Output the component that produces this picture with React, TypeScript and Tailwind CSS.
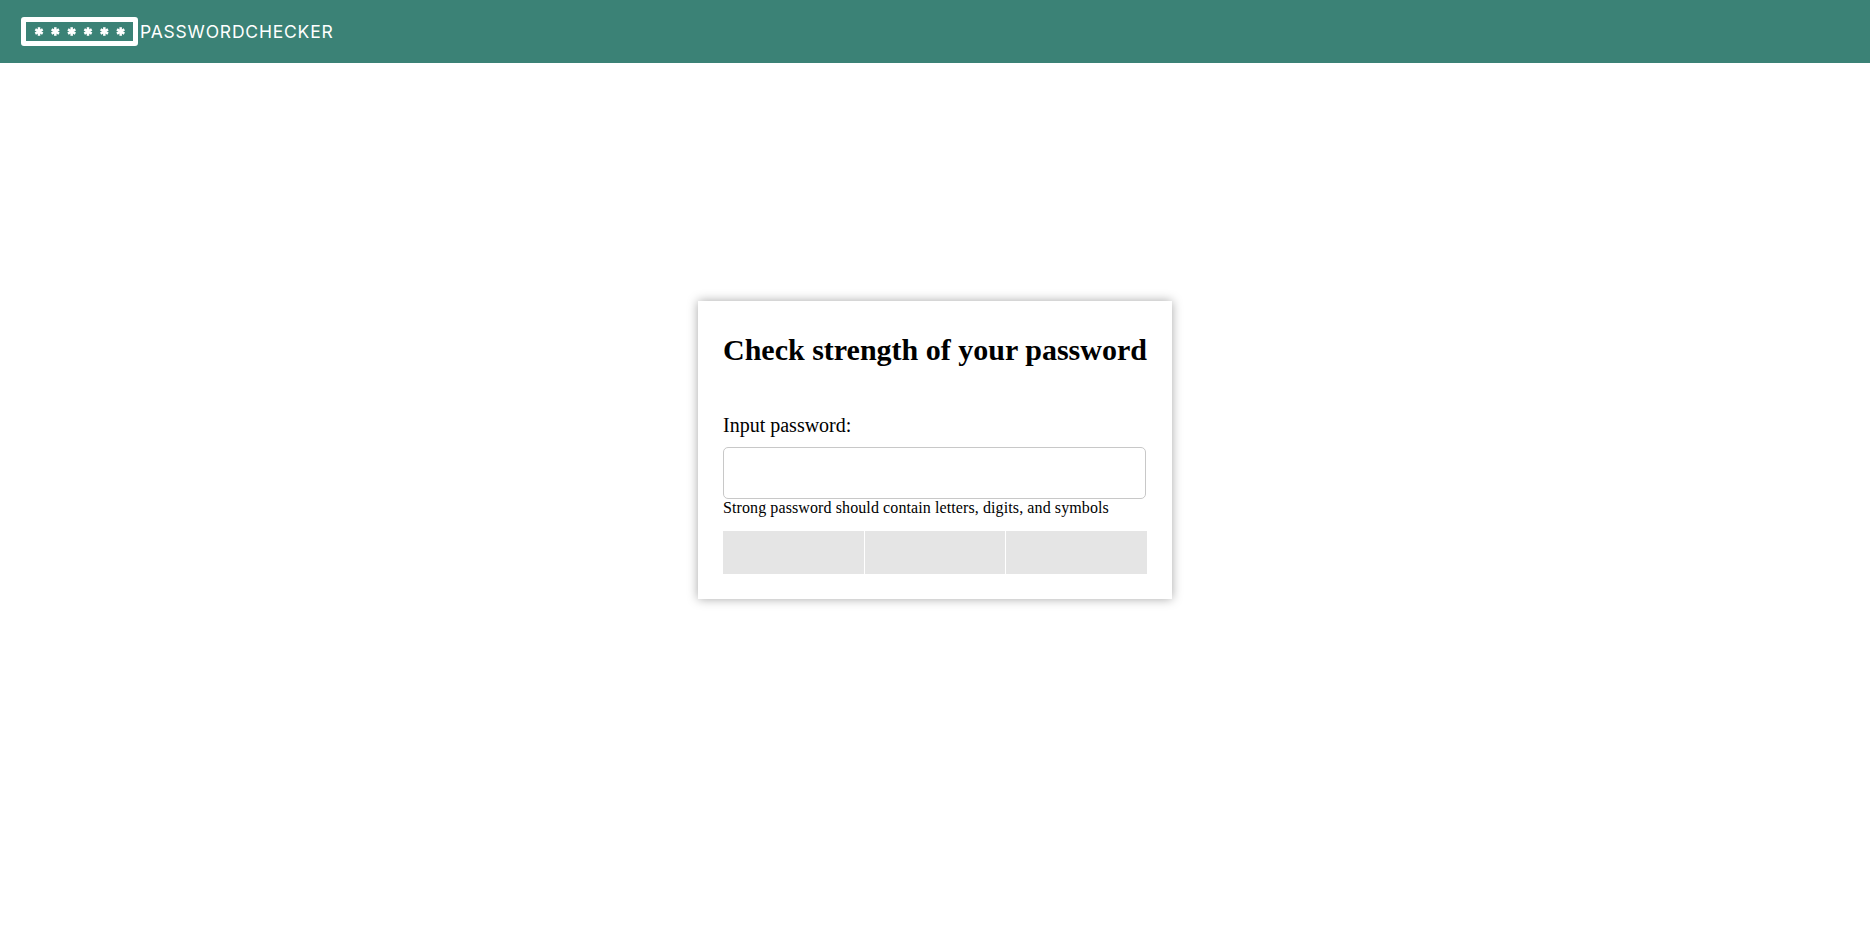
const stars = [18, 34.33, 50.67, 67, 83.33, 99.67];

function Logo() {
  return (
    <svg width="117" height="29" viewBox="0 0 117 29" className="shrink-0">
      <rect x="2.5" y="2.5" width="112" height="24" rx="0.5" fill="none" stroke="#fff" strokeWidth="5" />
      {stars.map((x) => (
        <g key={x} stroke="#fff" strokeWidth="2.5">
          <line x1={x} y1="10.2" x2={x} y2="18.8" />
          <line x1={x - 3.7} y1="12.35" x2={x + 3.7} y2="16.65" />
          <line x1={x - 3.7} y1="16.65" x2={x + 3.7} y2="12.35" />
        </g>
      ))}
    </svg>
  );
}

export default function App() {
  return (
    <div className="min-h-[943px] bg-white font-['Liberation_Serif',serif] text-black">
      <header className="flex h-[63px] items-center gap-[2px] bg-[#3b8276] pl-[21px]">
        <Logo />
        <span className="pt-[1px] font-['Inter',sans-serif] text-[17.5px] tracking-[0.8px] text-white">PASSWORDCHECKER</span>
      </header>

      <main className="flex justify-center pt-[238px]">
        <div className="w-[474px] bg-white p-[25px] shadow-[0_0_10px_rgba(0,0,0,0.35)]">
          <h1 className="mt-[5px] text-[30px] font-bold leading-[37px] whitespace-nowrap">Check strength of your password</h1>
          <label className="mt-[46px] block text-[20px] leading-[23px]">Input password:</label>
          <input
            type="password"
            className="mt-[10px] block h-[52px] w-[423px] rounded-[5px] border border-[#c8c8c8] bg-white outline-none"
          />
          <p className="text-[16px] leading-[18px] tracking-[0.1px]">Strong password should contain letters, digits, and symbols</p>
          <div className="mt-[14px] flex h-[43px] w-[424px] gap-[1px]">
            <div className="flex-1 bg-[#e5e5e5]" />
            <div className="flex-1 bg-[#e5e5e5]" />
            <div className="flex-1 bg-[#e5e5e5]" />
          </div>
        </div>
      </main>
    </div>
  );
}
